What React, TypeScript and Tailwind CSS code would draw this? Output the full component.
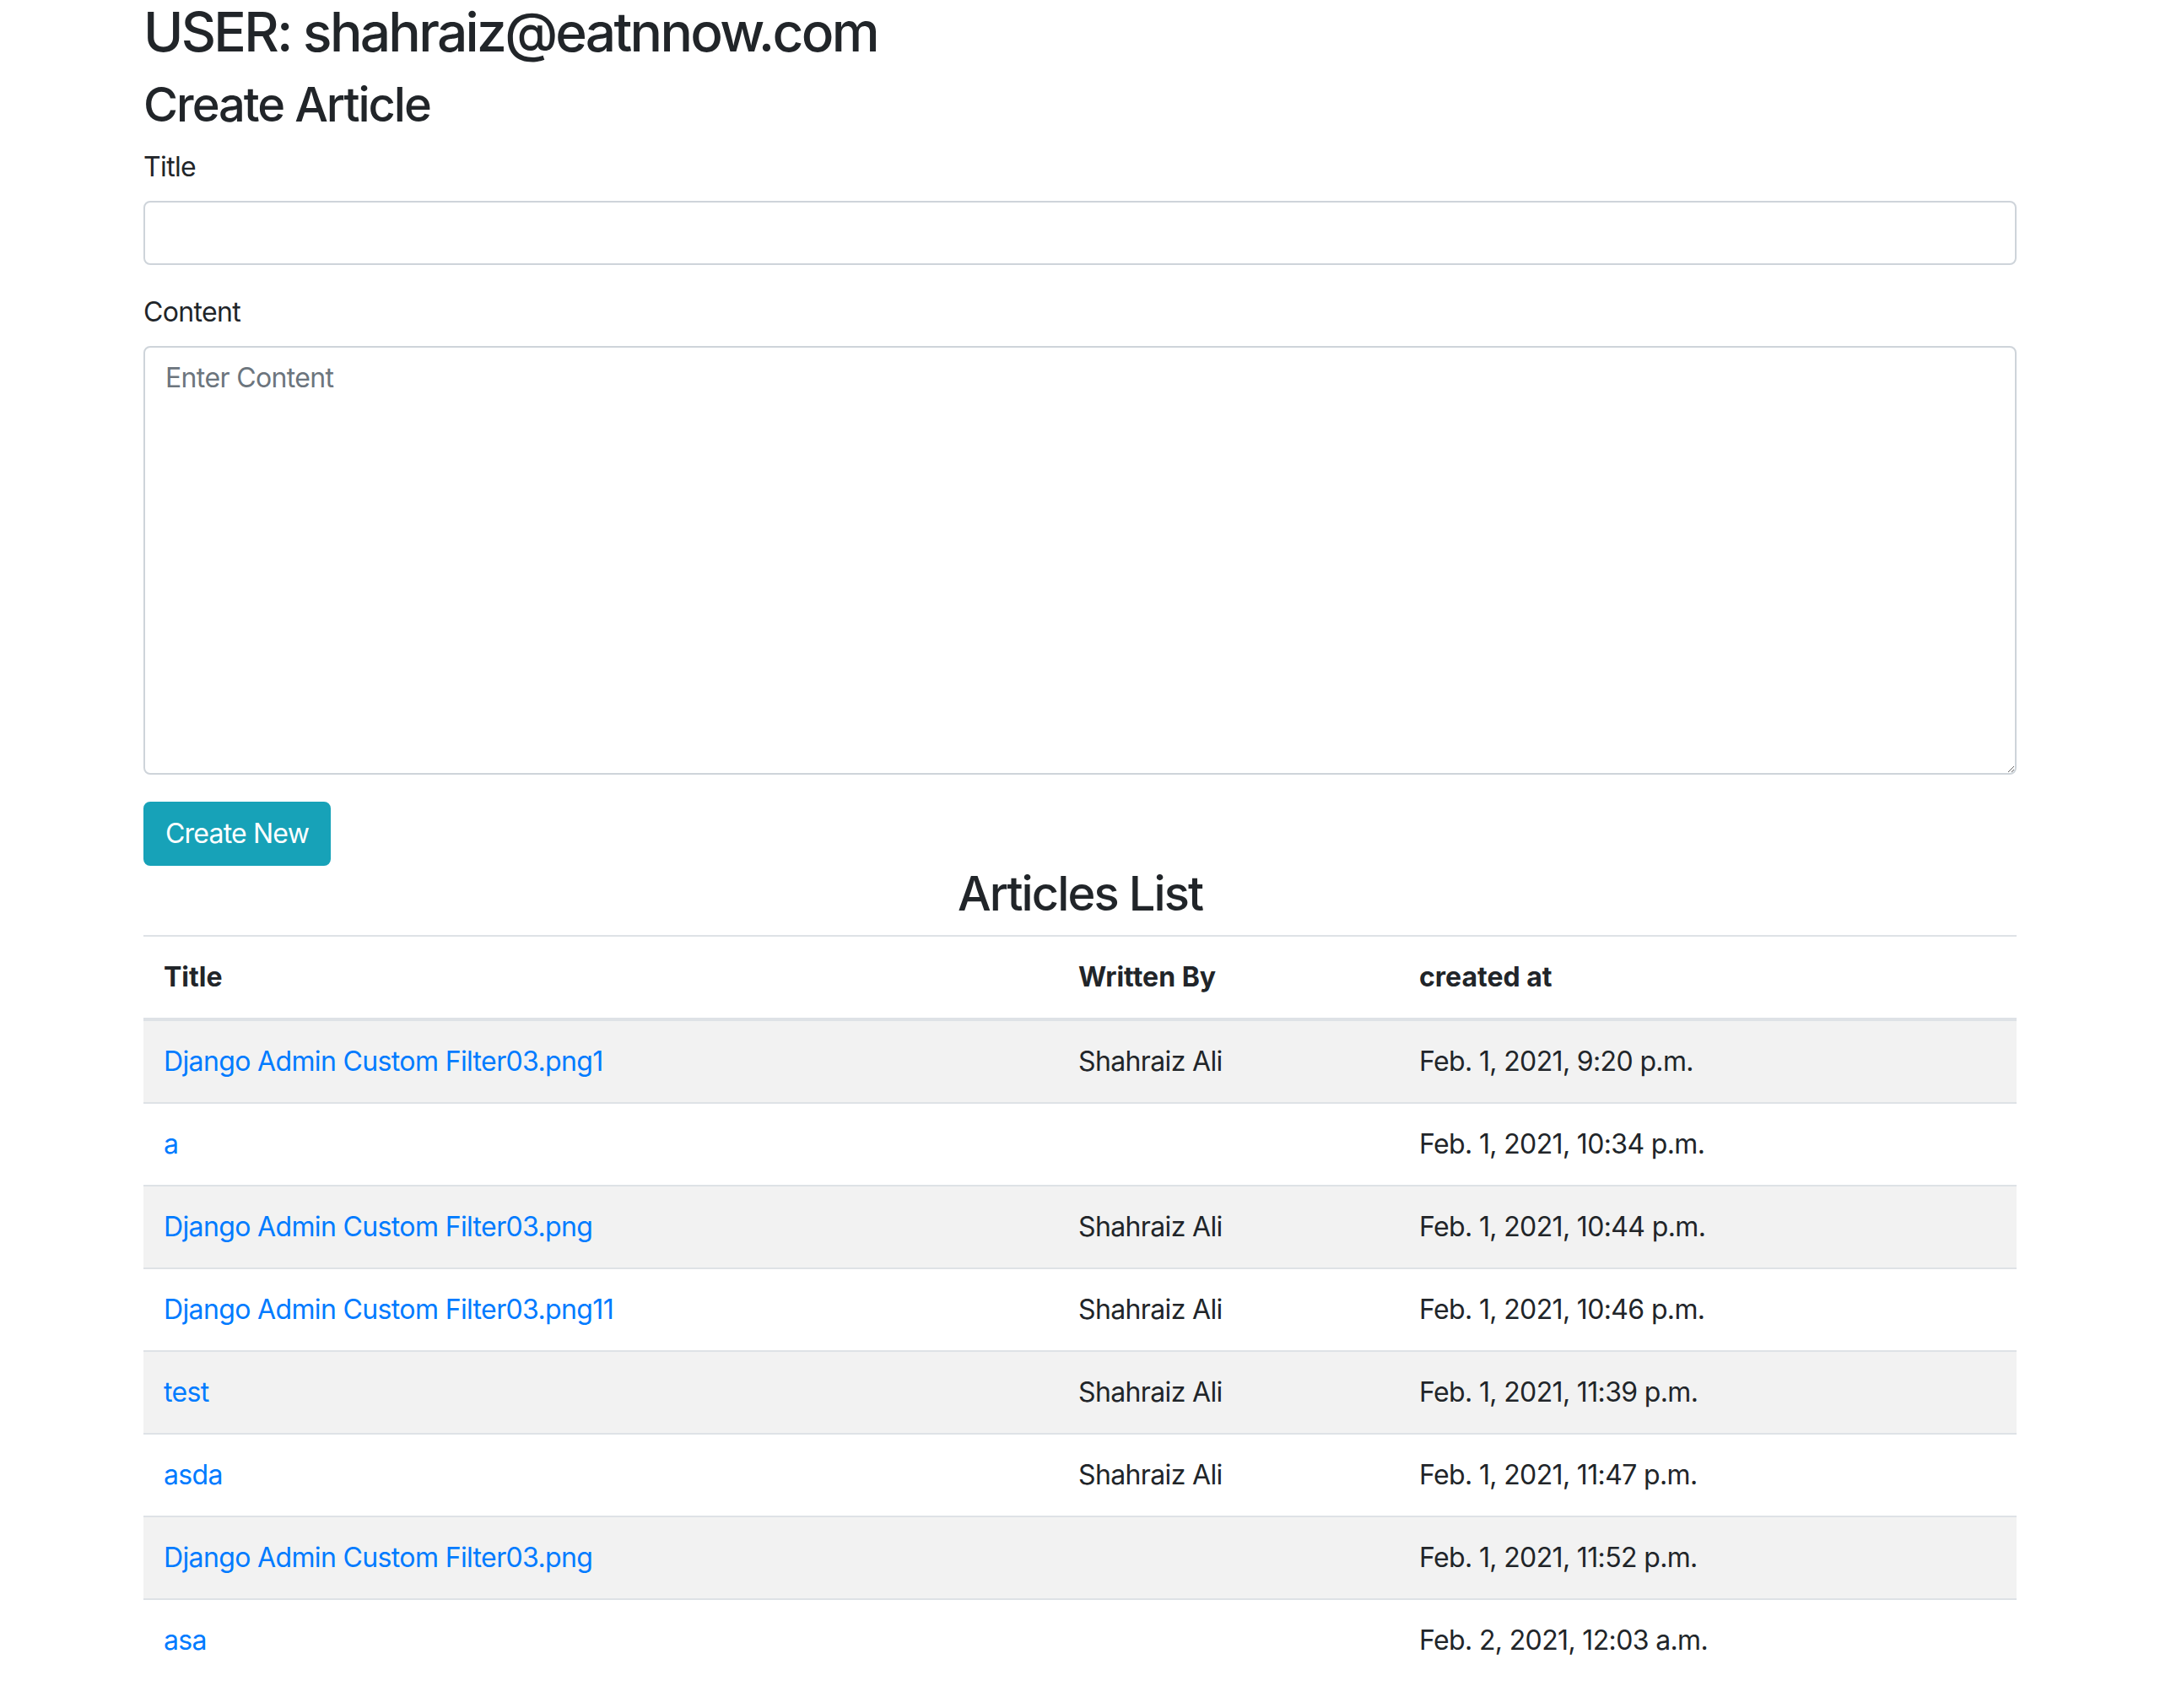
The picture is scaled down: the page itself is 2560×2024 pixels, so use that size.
import React from "react";

const rows: { title: string; by: string; at: string }[] = [
  { title: "Django Admin Custom Filter03.png1", by: "Shahraiz Ali", at: "Feb. 1, 2021, 9:20 p.m." },
  { title: "a", by: "", at: "Feb. 1, 2021, 10:34 p.m." },
  { title: "Django Admin Custom Filter03.png", by: "Shahraiz Ali", at: "Feb. 1, 2021, 10:44 p.m." },
  { title: "Django Admin Custom Filter03.png11", by: "Shahraiz Ali", at: "Feb. 1, 2021, 10:46 p.m." },
  { title: "test", by: "Shahraiz Ali", at: "Feb. 1, 2021, 11:39 p.m." },
  { title: "asda", by: "Shahraiz Ali", at: "Feb. 1, 2021, 11:47 p.m." },
  { title: "Django Admin Custom Filter03.png", by: "", at: "Feb. 1, 2021, 11:52 p.m." },
  { title: "asa", by: "", at: "Feb. 2, 2021, 12:03 a.m." },
];

export default function App() {
  return (
    <div className="min-h-screen bg-white text-[#212529] font-['Inter','Noto_Sans',sans-serif] text-[32px] leading-[1.5] tracking-[-0.02em]">
      <div className="w-[2220px] mx-auto">
        <h2 className="text-[64px] font-medium leading-[1.2] mb-[14px] tracking-[-0.042em]">USER: shahraiz@eatnnow.com</h2>
        <h3 className="text-[56px] font-medium leading-[1.2] mb-[16px] tracking-[-0.036em]">Create Article</h3>
        <div className="mb-[32px]">
          <label className="block mb-[16px]">Title</label>
          <input
            type="text"
            className="block w-full h-[76px] px-[24px] py-[12px] border-2 border-[#ced4da] rounded-[8px] bg-white outline-none"
          />
        </div>
        <div className="mb-[32px]">
          <label className="block mb-[16px]">Content</label>
          <textarea
            rows={10}
            placeholder="Enter Content"
            className="block w-full h-[508px] px-[24px] py-[12px] border-2 border-[#ced4da] rounded-[8px] bg-white outline-none placeholder:text-[#6c757d] resize-y"
          />
        </div>
        <button className="block h-[76px] px-[24px] bg-[#17a2b8] text-white rounded-[8px] border-2 border-[#17a2b8] leading-[1.5] tracking-[-0.025em]">
          Create New
        </button>
        <h3 className="text-[56px] font-medium leading-[1.2] mb-[15px] text-center tracking-[-0.034em]">Articles List</h3>
        <table className="w-full border-collapse">
          <thead>
            <tr className="tracking-normal">
              <th className="w-[1084px] text-left font-bold px-[24px] py-[24px] border-t-2 border-b-4 border-[#dee2e6] align-bottom">Title</th>
              <th className="w-[404px] text-left font-bold px-[24px] py-[24px] border-t-2 border-b-4 border-[#dee2e6] align-bottom">Written By</th>
              <th className="text-left font-bold px-[24px] py-[24px] border-t-2 border-b-4 border-[#dee2e6] align-bottom">created at</th>
            </tr>
          </thead>
          <tbody>
            {rows.map((r, i) => (
              <tr key={i} className={i % 2 === 0 ? "bg-[#f2f2f2]" : "bg-white"}>
                <td className="px-[24px] py-[24px] border-t-2 border-[#dee2e6]">
                  <a href="#" className="text-[#007bff]">{r.title}</a>
                </td>
                <td className="px-[24px] py-[24px] border-t-2 border-[#dee2e6]">{r.by}</td>
                <td className="px-[24px] py-[24px] border-t-2 border-[#dee2e6]">{r.at}</td>
              </tr>
            ))}
          </tbody>
        </table>
      </div>
    </div>
  );
}
